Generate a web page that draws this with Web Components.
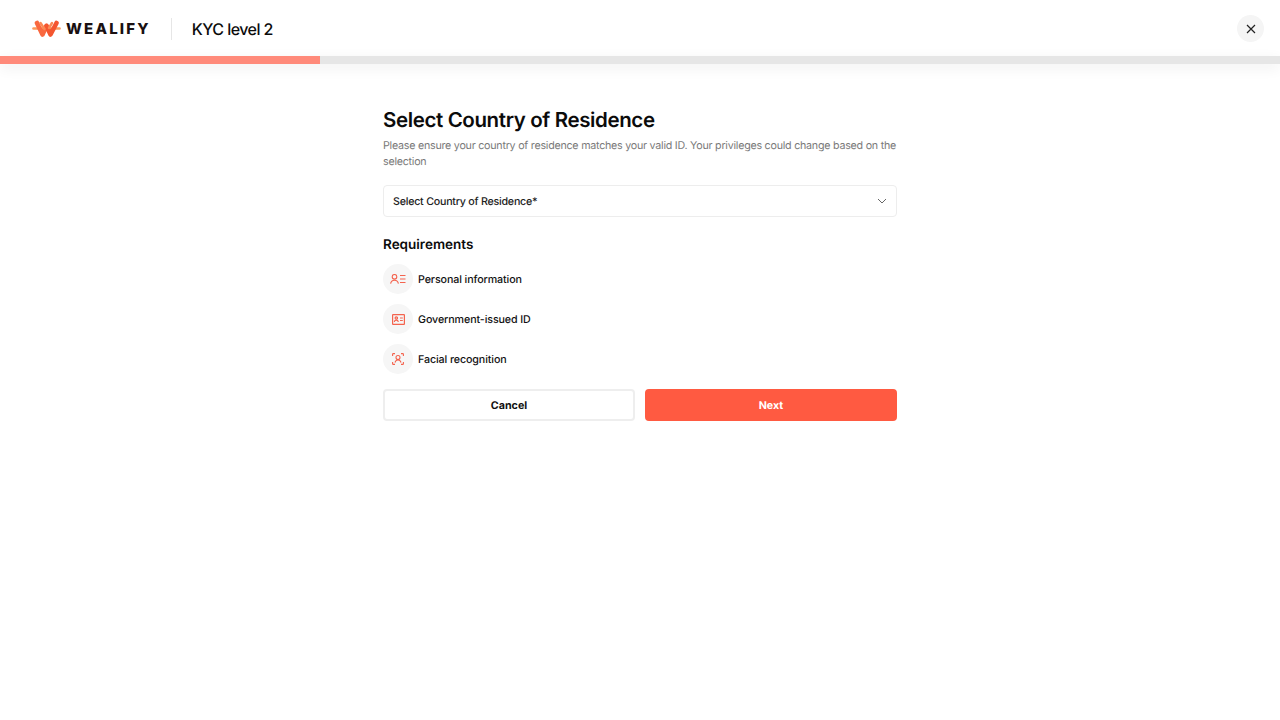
<!DOCTYPE html>
<html><head><meta charset="utf-8"><title>KYC level 2</title>
<style>html,body{margin:0;background:#fff;font-family:Inter,"Noto Sans",sans-serif;color:#0b0b0b;text-rendering:geometricPrecision}</style></head>
<body><kyc-app></kyc-app>
<script>
const def=(n,css,html)=>customElements.define(n,class extends HTMLElement{constructor(){super();this.attachShadow({mode:'open'}).innerHTML=`<style>${css}</style>${html}`}});
def('kyc-logo',`:host{display:flex;align-items:center;gap:5px}svg{display:block}span{font:800 15px/20px Inter,sans-serif;letter-spacing:2.2px;color:#1a1011}`,
`<svg width="29" height="18" viewBox="0 0 29 18" fill="none" stroke-linecap="round" stroke-linejoin="round"><path d="M1.500 8.500H27.500" stroke="#fb9a5c" stroke-width="2.600"/><path d="M5 3l5.500 11.500L14.500 6" stroke="#f9683f" stroke-width="4.600"/><path d="M14.500 6l4 8.500L24.500 3" stroke="#f4562f" stroke-width="4.600"/><path d="M8.500 3l4 6M20 3l-3 5" stroke="#fb8a55" stroke-width="2.500"/></svg><span>WEALIFY</span>`);
def('kyc-header',`:host{display:flex;align-items:center;height:56px;padding:1px 16px 0 32px;box-sizing:border-box}
.sep{width:1px;height:22px;background:#e6e6e6;margin:0 20px 0 20px}
h1{font:500 16px/24px Inter,sans-serif;letter-spacing:-.55px;margin:0;flex:1}
button{width:27px;height:27px;border:0;border-radius:50%;background:#f5f5f5;padding:0;display:flex;align-items:center;justify-content:center}`,
`<kyc-logo></kyc-logo><div class="sep"></div><h1>KYC level 2</h1><button aria-label="Close"><svg width="12" height="12" viewBox="0 0 12 12"><path d="M2 2l8 8M10 2l-8 8" stroke="#222" stroke-width="1.200" fill="none"/></svg></button>`);
def('kyc-progress',`:host{display:block;height:8px;background:#e6e6e6;box-shadow:0 4px 14px rgba(0,0,0,.07)}div{width:25%;height:100%;background:#ff8a7a}`,`<div></div>`);
def('kyc-select',`:host{display:flex;align-items:center;justify-content:space-between;height:32px;box-sizing:border-box;border:1px solid #ededed;border-radius:4px;padding:0 9px;font:450 10.700px/16px Inter,sans-serif;letter-spacing:-.24px;color:#222}
span{padding-top:1px}`,
`<span><slot></slot></span><svg width="10" height="6" viewBox="0 0 10 6"><path d="M1 1l4 4 4-4" stroke="#666" stroke-width="1" fill="none"/></svg>`);
def('kyc-req',`:host{display:flex;align-items:center;gap:5px;height:30px;font:450 10.700px/16px Inter,sans-serif;letter-spacing:-.1px;color:#111}
.i{width:30px;height:30px;border-radius:50%;background:#f6f6f6;display:flex;align-items:center;justify-content:center}
span{padding-top:1px}`,
`<div class="i"><slot name="icon"></slot></div><span><slot></slot></span>`);
def('kyc-button',`:host{flex:1;display:flex;align-items:center;justify-content:center;height:32px;box-sizing:border-box;border-radius:4px;padding-top:1px;font:700 10.700px/16px Inter,sans-serif;border:2px solid #eeeeee;background:#fff;color:#111}
:host([primary]){background:#ff5a41;border-color:#ff5a41;color:#fff}`,`<slot></slot>`);
def('kyc-app',`:host{display:block}
main{width:514px;margin:0 auto;padding-top:42px;display:flex;flex-direction:column}
h2{font:600 20.500px/28px Inter,sans-serif;letter-spacing:-.38px;margin:0 0 4px}
p{font:400 10.700px/16px Inter,sans-serif;letter-spacing:-.24px;color:#7a7a7a;margin:0 0 15px}
h3{font:600 13.500px/20px Inter,sans-serif;margin:18px 0 9px}
.reqs{display:flex;flex-direction:column;gap:10px}
.btns{display:flex;gap:10px;margin-top:15px}
svg{display:block}`,
`<kyc-header></kyc-header><kyc-progress></kyc-progress>
<main><h2>Select Country of Residence</h2>
<p>Please ensure your country of residence matches your valid ID. Your privileges could change based on the selection</p>
<kyc-select>Select Country of Residence*</kyc-select>
<h3>Requirements</h3>
<div class="reqs">
<kyc-req><svg slot="icon" width="16" height="10" viewBox="0 0 16 10" fill="none" stroke="#f4634e" stroke-width="1.100"><circle cx="4.500" cy="2.800" r="2.300"/><path d="M.6 9.700c.4-2.500 2-3.500 3.900-3.500s3.500 1 3.900 3.500M10 1.500h5.500M10 5h5.500M10 8.500h5.500"/></svg>Personal information</kyc-req>
<kyc-req><svg slot="icon" width="13" height="11" viewBox="0 0 13 11" fill="none" stroke="#f4634e" stroke-width="1.200"><rect x=".6" y=".6" width="11.800" height="9.800" rx=".5"/><circle cx="4.300" cy="4" r="1.200"/><path d="M2.300 8c.2-1.300 1-1.800 2-1.800s1.800.5 2 1.800M8 4h2.800M8 6.500h2.800"/></svg>Government-issued ID</kyc-req>
<kyc-req><svg slot="icon" width="12" height="12" viewBox="0 0 12 12" fill="none" stroke="#f4634e" stroke-width="1.100"><path d="M.6 3V1.300q0-.7.7-.7H3M9 .6h1.700q.7 0 .7.7V3M.6 9v1.700q0 .7.7.7H3M9 11.400h1.700q.7 0 .7-.7V9"/><circle cx="6" cy="4.500" r="2"/><path d="M3 9.500c.4-1.700 1.500-2.500 3-2.500s2.600.8 3 2.500"/></svg>Facial recognition</kyc-req>
</div>
<div class="btns"><kyc-button>Cancel</kyc-button><kyc-button primary>Next</kyc-button></div>
</main>`);
</script></body></html>
